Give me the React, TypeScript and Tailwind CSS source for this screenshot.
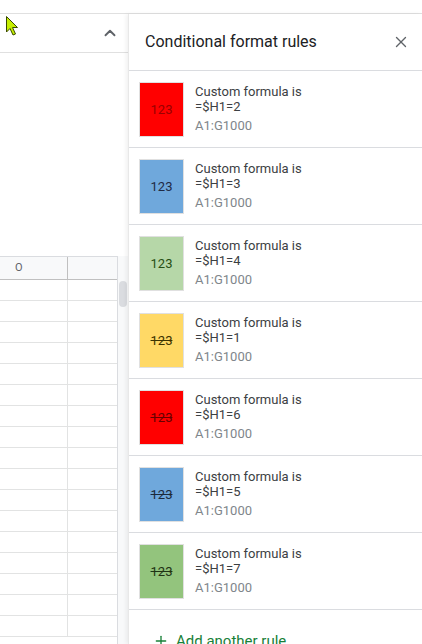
import {ChevronUp, X, Plus} from "lucide-react";

interface Rule {
  formula: string;
  swatch: string;
  text: string;
  struck: boolean;
}

const RULES: Rule[] = [
  {formula: "=$H1=2", swatch: "bg-[#ff0000]", text: "text-[#990000]", struck: false},
  {formula: "=$H1=3", swatch: "bg-[#6fa8dc]", text: "text-[#1f2a44]", struck: false},
  {formula: "=$H1=4", swatch: "bg-[#b6d7a8]", text: "text-[#274e13]", struck: false},
  {formula: "=$H1=1", swatch: "bg-[#ffd966]", text: "text-[#3c3300]", struck: true},
  {formula: "=$H1=6", swatch: "bg-[#ff0000]", text: "text-[#660000]", struck: true},
  {formula: "=$H1=5", swatch: "bg-[#6fa8dc]", text: "text-[#1c2a3a]", struck: true},
  {formula: "=$H1=7", swatch: "bg-[#93c47d]", text: "text-[#1f3314]", struck: true},
];

const ROWS = Array.from({length: 17});

function Cursor() {
  return (
    <svg
      className="absolute left-[5px] top-[15px]"
      width="15"
      height="22"
      viewBox="0 0 15 22"
    >
      <path
        d="M1.5 1.5 L1.5 17 L5 13.5 L8 20 L10.5 19 L7.5 12.5 L12.5 12.5 Z"
        fill="#c6ef00"
        stroke="#3a4a00"
        strokeWidth="1"
        strokeLinejoin="round"
      />
    </svg>
  );
}

export default function App() {
  return (
    <div
      className="relative w-[422px] h-[644px] overflow-hidden bg-white flex flex-col"
      style={{fontFamily: "Roboto, 'Liberation Sans', sans-serif"}}
    >
      <div className="h-[14px] border-b border-[#e0e0e0] shrink-0" />
      <div className="flex flex-1 min-h-0">
        {/* sheet area */}
        <div className="w-[128px] shrink-0 flex flex-col">
          <div className="h-[39px] border-b border-[#e0e0e0] flex items-center justify-end pr-[9px] shrink-0">
            <ChevronUp size={18} strokeWidth={2.5} className="text-[#5f6368]" />
          </div>
          <div className="h-[203px] shrink-0" />
          <div className="flex flex-1 min-h-0">
            <div className="w-[117px] flex flex-col border-t border-[#dadce0]">
              <div className="h-[23px] flex bg-[#f8f9fa] border-b border-[#c0c0c0] shrink-0">
                <div className="w-[68px] border-r border-[#c0c0c0] flex items-center pl-[15px] text-[11px] text-[#5f6368]">
                  O
                </div>
                <div className="flex-1" />
              </div>
              {ROWS.map((_, i) => (
                <div key={i} className="h-[21px] flex border-b border-[#e2e3e3] shrink-0">
                  <div className="w-[68px] border-r border-[#e2e3e3]" />
                  <div className="flex-1" />
                </div>
              ))}
            </div>
            <div className="flex-1 bg-[#f8f9fa] border-l border-[#dadce0] pt-[25px] flex justify-center">
              <div className="w-[8px] h-[26px] rounded-full bg-[#dadce0]" />
            </div>
          </div>
        </div>

        {/* side panel */}
        <div className="flex-1 flex flex-col border-l border-[#e8e8e8] shadow-[-2px_0_4px_rgba(0,0,0,0.06)] bg-white">
          <div className="h-[57px] shrink-0 border-b border-[#dadce0] flex items-center justify-between pl-[16px] pr-[12px]">
            <span className="text-[16px] text-[#202124]">Conditional format rules</span>
            <X size={18} strokeWidth={1.8} className="text-[#5f6368]" />
          </div>
          {RULES.map((r) => (
            <div
              key={r.formula}
              className="h-[77px] shrink-0 border-b border-[#dadce0] flex items-start pl-[10px] pt-[11px] gap-[11px]"
            >
              <div
                className={`w-[45px] h-[55px] border border-[#e0e0e0] ${r.swatch} flex items-center justify-center`}
              >
                <span className={`text-[13px] ${r.text} ${r.struck ? "line-through" : ""}`}>
                  123
                </span>
              </div>
              <div className="flex flex-col pt-[2px] text-[13px]">
                <span className="leading-[15px] text-[#3c4043]">Custom formula is</span>
                <span className="leading-[15px] text-[#3c4043]">{r.formula}</span>
                <span className="mt-[2px] leading-[20px] text-[#80868b]">A1:G1000</span>
              </div>
            </div>
          ))}
          <div className="flex items-center gap-[7px] pl-[24px] pt-[20px] text-[#188038]">
            <Plus size={16} strokeWidth={2} />
            <span className="text-[15px]">Add another rule</span>
          </div>
        </div>
      </div>
      <Cursor />
    </div>
  );
}
